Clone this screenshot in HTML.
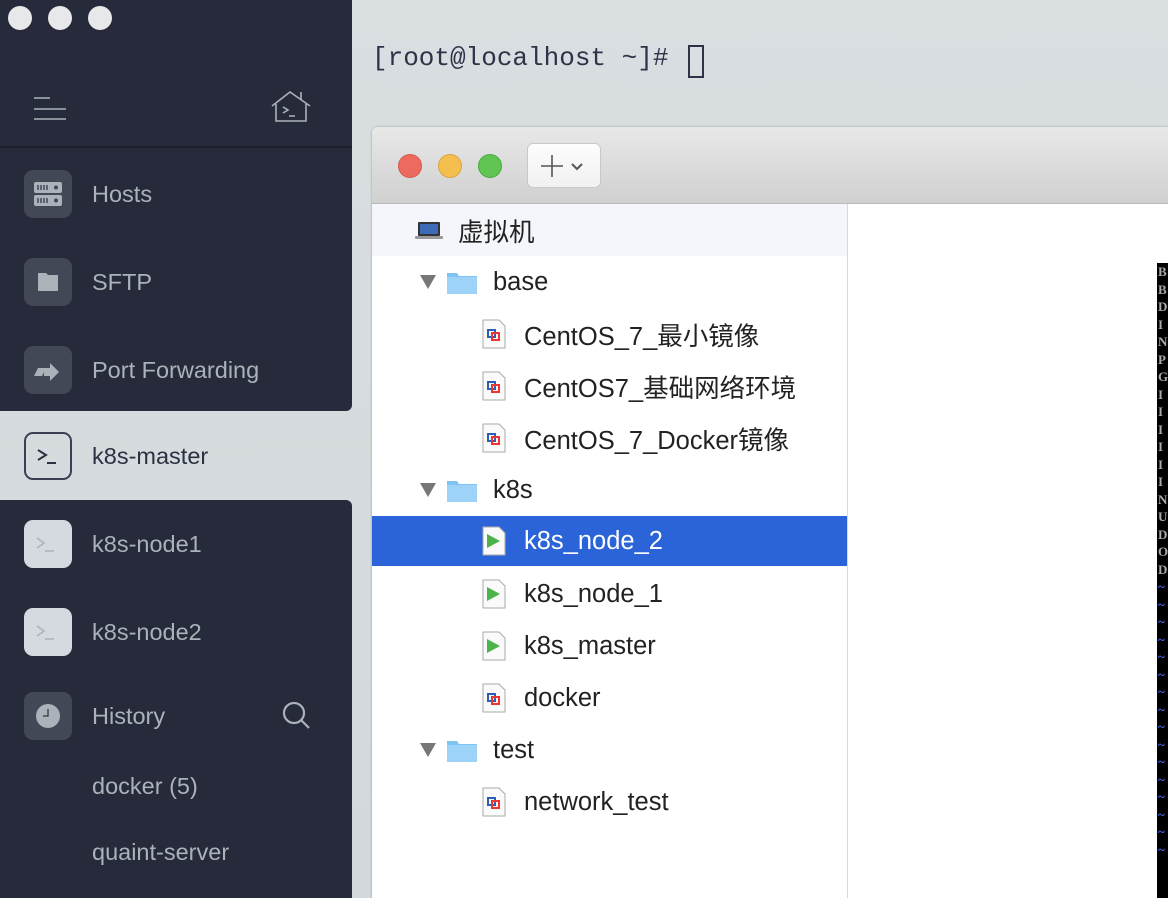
<!DOCTYPE html>
<html><head><meta charset="utf-8"><style>
*{margin:0;padding:0;box-sizing:border-box}
html,body{width:1168px;height:898px;overflow:hidden}
body{position:relative;background:linear-gradient(#d9dee1,#d2d8dc);font-family:"Liberation Sans","Noto Sans CJK SC",sans-serif}
.dark{position:absolute;left:0;width:352px;background:#262a3b}
.dots span{position:absolute;top:6px;width:24px;height:24px;border-radius:50%;background:#e6e8ea}
.side{position:absolute;left:0;width:352px;height:88px;display:flex;align-items:center;color:#aab3ba;font-size:23.5px}
.ic{position:absolute;left:24px;width:48px;height:48px;border-radius:9px;background:#434856}
.side .t{position:absolute;left:92px}
.term{position:absolute;left:372px;top:43px;font-family:"Liberation Mono","DejaVu Sans Mono",monospace;font-size:26px;color:#2f3347}
.win{position:absolute;left:372px;top:127px;width:796px;height:771px;border-radius:6px 0 0 0;background:#fff;overflow:hidden;box-shadow:0 0 2px rgba(0,0,0,.3)}
.tb{position:absolute;left:0;top:0;right:0;height:77px;background:linear-gradient(#e8e8e8,#d0d0d0);border-bottom:1px solid #b9b9b9}
.tl{position:absolute;top:27px;width:24px;height:24px;border-radius:50%}
.row{position:absolute;left:0;width:475px;height:52px;font-size:25.5px;color:#222;display:flex;align-items:center}
.row .l{position:absolute}
.tri{position:absolute;left:48px;width:0;height:0;border-left:8px solid transparent;border-right:8px solid transparent;border-top:14px solid #777}
.fold{position:absolute;left:75px;width:30px;height:23px}
.doc{position:absolute;left:110px;width:24px;height:30px}
</style></head><body>
<div class="dark" style="top:0;height:411px;border-radius:0 0 6px 0"></div>
<div class="dark" style="top:500px;height:398px;border-radius:0 6px 0 0"></div>
<div style="position:absolute;left:0;top:146px;width:352px;height:2px;background:#1c1f2c"></div>
<div class="dots"><span style="left:8px"></span><span style="left:48px"></span><span style="left:88px"></span></div>
<svg style="position:absolute;left:33px;top:97px" width="34" height="24"><path d="M1 1h16M1 12h32M1 22h32" stroke="#aab3ba" stroke-width="1.6"/></svg>
<svg style="position:absolute;left:270px;top:90px" width="42" height="34" fill="none" stroke="#aab3ba" stroke-width="1.6"><path d="M2 16L20 2 40 16M6 14v17h30V14M31 9V2"/><path d="M13 17l5 3-5 3M19 26h6"/></svg>
<div class="side" style="top:150px"><div class="ic"><svg width="48" height="48"><rect x="10" y="12" width="28" height="11" rx="2" fill="#aab3ba"/><rect x="10" y="25" width="28" height="11" rx="2" fill="#aab3ba"/><path d="M14 15v5M17 15v5M20 15v5M23 15v5M14 28v5M17 28v5M20 28v5M23 28v5" stroke="#434856" stroke-width="1.5"/><circle cx="32" cy="17.5" r="2" fill="#434856"/><circle cx="32" cy="30.5" r="2" fill="#434856"/></svg></div><span class="t">Hosts</span></div>
<div class="side" style="top:238px"><div class="ic"><svg width="48" height="48"><path d="M14 15h8l2 2h10v16H14z" fill="#aab3ba"/></svg></div><span class="t">SFTP</span></div>
<div class="side" style="top:326px"><div class="ic"><svg width="48" height="48"><path d="M10 30l4-8h8l-4 8zM20 22h6v-5l9 9-9 9v-5h-6z" fill="#aab3ba"/></svg></div><span class="t">Port Forwarding</span></div>
<div class="side" style="top:412px;color:#2c3142"><div class="ic" style="background:none;border:2px solid #3a3f52;border-radius:9px"><svg width="44" height="44"><path d="M12 16l8 5-8 5M21 29h9" stroke="#2c3142" stroke-width="2" fill="none"/></svg></div><span class="t">k8s-master</span></div>
<div class="side" style="top:500px"><div class="ic" style="background:#d4dadf"><svg width="48" height="48"><path d="M13 18l7 5-7 5M21 31h9" stroke="#aab3ba" stroke-width="1.6" fill="none"/></svg></div><span class="t">k8s-node1</span></div>
<div class="side" style="top:588px"><div class="ic" style="background:#d4dadf"><svg width="48" height="48"><path d="M13 18l7 5-7 5M21 31h9" stroke="#aab3ba" stroke-width="1.6" fill="none"/></svg></div><span class="t">k8s-node2</span></div>
<div class="side" style="top:672px"><div class="ic"><svg width="48" height="48"><circle cx="24" cy="24" r="12" fill="#aab3ba"/><path d="M24 17v7h-5" stroke="#434856" stroke-width="1.5" fill="none"/></svg></div><span class="t">History</span>
<svg style="position:absolute;left:281px;top:28px" width="32" height="32" fill="none" stroke="#aab3ba" stroke-width="2.2"><circle cx="13" cy="13" r="10"/><path d="M20 20l8 8"/></svg></div>
<div class="side" style="top:742px"><span class="t">docker (5)</span></div>
<div class="side" style="top:808px"><span class="t">quaint-server</span></div>

<div class="term">[root@localhost ~]#</div>
<div style="position:absolute;left:688px;top:45px;width:16px;height:33px;border:2px solid #2f3347"></div>

<div class="win">
<div class="tb">
<div class="tl" style="left:26px;background:#ec6a5e;border:1px solid #d55a4f"></div>
<div class="tl" style="left:66px;background:#f4bf4f;border:1px solid #d9a43d"></div>
<div class="tl" style="left:106px;background:#61c554;border:1px solid #4fa944"></div>
<div style="position:absolute;left:155px;top:16px;width:74px;height:45px;border-radius:6px;background:linear-gradient(#fdfdfd,#f1f1f1);border:1px solid #c8c8c8"><svg width="74" height="45"><path d="M24 11v22M13 22h22" stroke="#555" stroke-width="1.6"/><path d="M44 20l5 5 5-5" stroke="#555" stroke-width="2" fill="none"/></svg></div>
</div>
<div style="position:absolute;left:475px;top:77px;width:1px;height:694px;background:#d8d8d8"></div>
<div style="position:absolute;left:785px;top:136px;width:11px;height:635px;overflow:hidden;background:#000;font-family:'Liberation Serif',serif;font-size:13px;line-height:17.5px;color:#aaa;padding-left:1px;font-weight:bold">B<br>B<br>D<br>I<br>N<br>P<br>G<br>I<br>I<br>I<br>I<br>I<br>I<br>N<br>U<br>D<br>O<br>D<br><span style="color:#46f">~<br>~<br>~<br>~<br>~<br>~<br>~<br>~<br>~<br>~<br>~<br>~<br>~<br>~<br>~<br>~</span></div>

<div class="row" style="top:77px;background:#f4f6fb;width:475px"><svg style="position:absolute;left:42px" width="30" height="22"><rect x="4" y="3" width="22" height="14" rx="1" fill="#333"/><rect x="6" y="5" width="18" height="10" fill="#3d6bb8"/><rect x="1" y="17" width="28" height="3" rx="1" fill="#999"/></svg><span class="l" style="left:86px">虚拟机</span></div>

<div class="row" style="top:129px"><div class="tri"></div><svg class="fold" viewBox="0 0 30 23"><path d="M0 2h10l2 3h18v18H0z" fill="#7fc4f3"/><path d="M0 6h30v17H0z" fill="#9dd3f8"/></svg><span class="l" style="left:121px">base</span></div>
<div class="row" style="top:181px"><svg class="doc"><path d="M1 1h16l6 6v22H1z" fill="#fafafa" stroke="#aaa"/><rect x="6" y="11" width="7" height="7" fill="none" stroke="#2b5fb5" stroke-width="2"/><rect x="10" y="14" width="7" height="7" fill="none" stroke="#e33" stroke-width="2"/></svg><span class="l" style="left:152px">CentOS_7_最小镜像</span></div>
<div class="row" style="top:233px"><svg class="doc"><path d="M1 1h16l6 6v22H1z" fill="#fafafa" stroke="#aaa"/><rect x="6" y="11" width="7" height="7" fill="none" stroke="#2b5fb5" stroke-width="2"/><rect x="10" y="14" width="7" height="7" fill="none" stroke="#e33" stroke-width="2"/></svg><span class="l" style="left:152px">CentOS7_基础网络环境</span></div>
<div class="row" style="top:285px"><svg class="doc"><path d="M1 1h16l6 6v22H1z" fill="#fafafa" stroke="#aaa"/><rect x="6" y="11" width="7" height="7" fill="none" stroke="#2b5fb5" stroke-width="2"/><rect x="10" y="14" width="7" height="7" fill="none" stroke="#e33" stroke-width="2"/></svg><span class="l" style="left:152px">CentOS_7_Docker镜像</span></div>

<div class="row" style="top:337px"><div class="tri"></div><svg class="fold" viewBox="0 0 30 23"><path d="M0 2h10l2 3h18v18H0z" fill="#7fc4f3"/><path d="M0 6h30v17H0z" fill="#9dd3f8"/></svg><span class="l" style="left:121px">k8s</span></div>
<div class="row" style="top:389px;background:#2a64d8;color:#fff;height:50px"><svg class="doc"><path d="M1 1h16l6 6v22H1z" fill="#fafafa" stroke="#aaa"/><path d="M5 8l13 7-13 7z" fill="#4cb34a"/></svg><span class="l" style="left:152px">k8s_node_2</span></div>
<div class="row" style="top:441px"><svg class="doc"><path d="M1 1h16l6 6v22H1z" fill="#fafafa" stroke="#aaa"/><path d="M5 8l13 7-13 7z" fill="#4cb34a"/></svg><span class="l" style="left:152px">k8s_node_1</span></div>
<div class="row" style="top:493px"><svg class="doc"><path d="M1 1h16l6 6v22H1z" fill="#fafafa" stroke="#aaa"/><path d="M5 8l13 7-13 7z" fill="#4cb34a"/></svg><span class="l" style="left:152px">k8s_master</span></div>
<div class="row" style="top:545px"><svg class="doc"><path d="M1 1h16l6 6v22H1z" fill="#fafafa" stroke="#aaa"/><rect x="6" y="11" width="7" height="7" fill="none" stroke="#2b5fb5" stroke-width="2"/><rect x="10" y="14" width="7" height="7" fill="none" stroke="#e33" stroke-width="2"/></svg><span class="l" style="left:152px">docker</span></div>
<div class="row" style="top:597px"><div class="tri"></div><svg class="fold" viewBox="0 0 30 23"><path d="M0 2h10l2 3h18v18H0z" fill="#7fc4f3"/><path d="M0 6h30v17H0z" fill="#9dd3f8"/></svg><span class="l" style="left:121px">test</span></div>
<div class="row" style="top:649px"><svg class="doc"><path d="M1 1h16l6 6v22H1z" fill="#fafafa" stroke="#aaa"/><rect x="6" y="11" width="7" height="7" fill="none" stroke="#2b5fb5" stroke-width="2"/><rect x="10" y="14" width="7" height="7" fill="none" stroke="#e33" stroke-width="2"/></svg><span class="l" style="left:152px">network_test</span></div>
</div>
</body></html>
